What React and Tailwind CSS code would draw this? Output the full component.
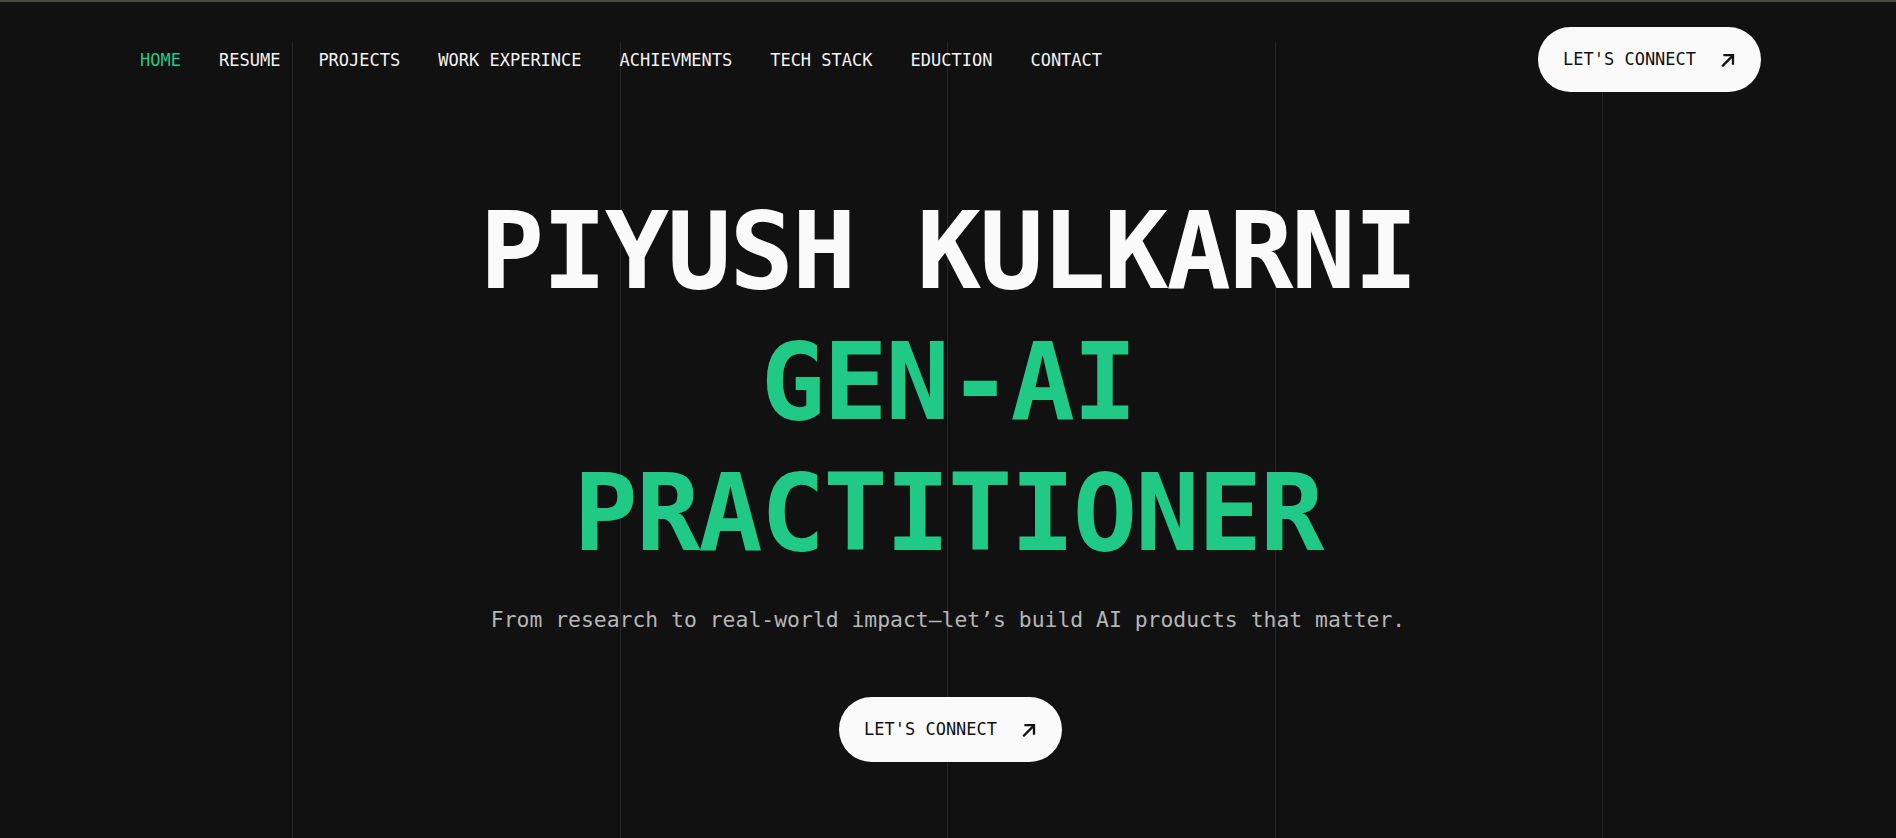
import React from 'react';

const navLinks = [
  'HOME',
  'RESUME',
  'PROJECTS',
  'WORK EXPERINCE',
  'ACHIEVMENTS',
  'TECH STACK',
  'EDUCTION',
  'CONTACT',
];

const mono = { fontFamily: '"DejaVu Sans Mono", "Liberation Mono", monospace' };

function ArrowUpRight() {
  return (
    <svg width="14" height="14" viewBox="0 0 14 14" fill="none" stroke="#111111" strokeWidth="2.3" strokeLinecap="square">
      <path d="M2 12.5 L11.5 3" />
      <path d="M3.5 2.2 H12 V10.5" />
    </svg>
  );
}

function ConnectButton() {
  return (
    <button className="flex items-center justify-between h-[65px] w-[223px] pl-[25px] pr-[26px] rounded-full bg-[#fafafa] text-[#111111] text-[17px]">
      <span>LET&apos;S CONNECT</span>
      <ArrowUpRight />
    </button>
  );
}

export default function App() {
  return (
    <div className="relative min-h-screen h-[838px] bg-[#111111] overflow-hidden" style={mono}>
      <div className="h-[2px] bg-[#4a4a40]"></div>

      {/* background grid lines */}
      <div className="absolute top-[42px] bottom-0 left-[292px] w-[1311px] flex pointer-events-none">
        <div className="flex-1 border-l border-[#262626]"></div>
        <div className="flex-1 border-l border-[#262626]"></div>
        <div className="flex-1 border-l border-[#262626]"></div>
        <div className="flex-1 border-l border-r border-[#262626]"></div>
      </div>

      <div className="relative">
        {/* Nav */}
        <nav className="flex items-center justify-between pl-[140px] pr-[135px] pt-[25px]">
          <ul className="flex items-center gap-[38px] text-[17px] pt-[2px]">
            {navLinks.map((link) => (
              <li key={link} className={link === 'HOME' ? 'text-[#20c985]' : 'text-[#f2f2f2]'}>
                {link}
              </li>
            ))}
          </ul>
          <ConnectButton />
        </nav>

        {/* Hero */}
        <section className="flex flex-col items-center pt-[94px]">
          <h1 className="text-center font-bold text-[107px] leading-[131px] tracking-[-2px]">
            <span className="block text-[#fafafa]">PIYUSH KULKARNI</span>
            <span className="block text-[#20c985]">GEN-AI</span>
            <span className="block text-[#20c985]">PRACTITIONER</span>
          </h1>
          <p className="mt-[27px] text-[21.4px] leading-[28px] text-[#b5b5b5]">
            From research to real-world impact—let&rsquo;s build AI products that matter.
          </p>
          <div className="mt-[63px] ml-[5px]">
            <ConnectButton />
          </div>
        </section>
      </div>
    </div>
  );
}
